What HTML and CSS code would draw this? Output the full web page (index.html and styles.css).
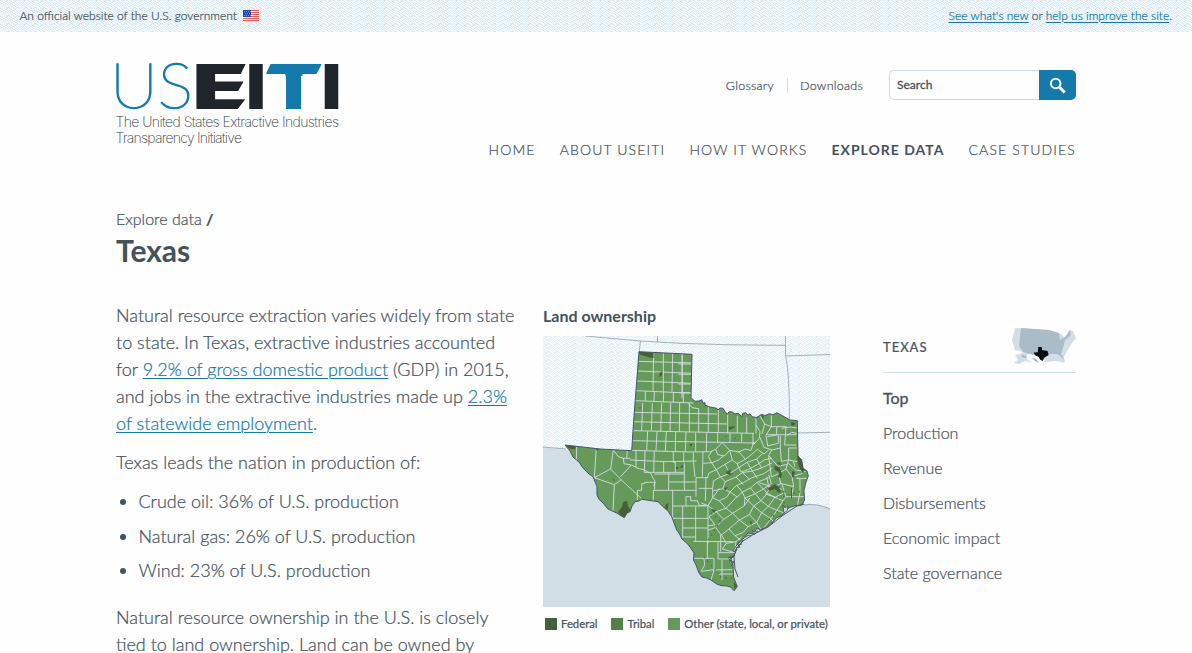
FILE: index.html
```html
<!DOCTYPE html>
<html lang="en">
<head>
<meta charset="utf-8">
<title>Texas | U.S. Extractive Industries Transparency Initiative</title>
<link rel="stylesheet" href="styles.css">
</head>
<body>
<div class="banner">
  <div class="banner-official">An official website of the U.S. government
    <svg class="flag" width="16" height="11" viewBox="0 0 16 11"><path fill="#fff0e6" d="M0 0h16v11H0z"/><path stroke="#ea5b4b" stroke-width="1" d="M0 .5h16M0 2.5h16M0 4.5h16M0 6.5h16M0 8.5h16M0 10.5h16"/><path fill="#2f43b4" d="M0 0h8v7H0z"/><path stroke="#c6cdf2" stroke-width=".7" stroke-dasharray=".8 1.2" d="M1 1.5h7M2 3.5h6M1 5.5h7"/></svg>
  </div>
  <div><a href="#">See what's new</a> or <a href="#">help us improve the site</a>.</div>
</div>
<header class="header wrap">
  <a class="logo" href="#" aria-label="USEITI">
    <svg width="226" height="90" viewBox="115 60 226 90">
      <defs>
        <clipPath id="e-cut"><path d="M190 55H250L240 75.5V80H244.5L237.5 92V97H247L237 110H190Z"/></clipPath>
        <clipPath id="t-cut"><path d="M272.5 60H324L315.5 75.7H301V112H286V75.7H265Z"/></clipPath>
      </defs>
      <text class="logo-us" x="110" y="108.300" textLength="83" lengthAdjust="spacingAndGlyphs">US</text>
      <g clip-path="url(#e-cut)"><text class="logo-bold" x="192" y="108.5" textLength="58" lengthAdjust="spacingAndGlyphs">E</text></g>
      <text class="logo-bold" x="246" y="108.5" textLength="20" lengthAdjust="spacingAndGlyphs">I</text>
      <g clip-path="url(#t-cut)"><text class="logo-bold logo-t" x="264" y="108.5" textLength="60" lengthAdjust="spacingAndGlyphs">T</text></g>
      <text class="logo-bold" x="321.5" y="108.5" textLength="20" lengthAdjust="spacingAndGlyphs">I</text>
      <text class="logo-tag" x="115.500" y="127" textLength="223.500">The United States Extractive Industries</text>
      <text class="logo-tag" x="115.500" y="143" textLength="126.500">Transparency Initiative</text>
    </svg>
  </a>
  <div class="header-right">
    <div class="tools">
      <a href="#">Glossary</a><a class="split" href="#">Downloads</a>
      <form class="search"><span class="search-field">Search</span><button class="search-button" type="button" aria-label="Search"><svg width="18" height="18" viewBox="0 0 18 18" fill="none" stroke="#fff"><circle cx="6.7" cy="6.5" r="4.8" stroke-width="2"/><path stroke-width="3" d="M10.5 10.2l5.3 5.3"/></svg></button></form>
    </div>
    <nav class="nav"><a href="#">HOME</a><a href="#">ABOUT USEITI</a><a href="#">HOW IT WORKS</a><a class="current" href="#">EXPLORE DATA</a><a href="#">CASE STUDIES</a></nav>
  </div>
</header>
<main class="wrap">
  <div class="crumb">Explore data <span>/</span></div>
  <h1>Texas</h1>
  <div class="columns">
    <section class="copy">
      <p>Natural resource extraction varies widely from state<br>to state. In Texas, extractive industries accounted<br>for <a href="#">9.2% of gross domestic product</a> (GDP) in 2015,<br>and jobs in the extractive industries made up <a href="#">2.3%</a><br><a href="#">of statewide employment</a>.</p>
      <p>Texas leads the nation in production of:</p>
      <ul><li>Crude oil: 36% of U.S. production</li><li>Natural gas: 26% of U.S. production</li><li>Wind: 23% of U.S. production</li></ul>
      <p>Natural resource ownership in the U.S. is closely<br>tied to land ownership. Land can be owned by</p>
    </section>
    <section class="ownership">
      <h2>Land ownership</h2>
      <svg class="map" width="287" height="271" viewBox="543 336 287 271">
        <defs>
          <pattern id="dots" width="9" height="8" patternUnits="userSpaceOnUse"><path fill="#f7fbfd" d="M0 0h9v8H0z"/><path fill="#e2eef5" d="M0 0h2v1H0zM4 0h1v1H4zM6 0h2v1H6zM2 1h1v1H2zM5 1h2v1H5zM0 2h1v1H0zM3 2h2v1H3zM7 2h1v1H7zM1 3h2v1H1zM5 3h1v1H5zM8 3h1v1H8zM0 4h1v1H0zM3 4h1v1H3zM6 4h2v1H6zM1 5h1v1H1zM4 5h2v1H4zM8 5h1v1H8zM2 6h2v1H2zM6 6h1v1H6zM0 7h1v1H0zM4 7h1v1H4zM7 7h2v1H7z"/></pattern>
          <path id="state" d="M639 351.7L692 354.3L691 397.7L693 399.5L695 401.3L699 401L701.7 399.8L703 403L705 402.7V405.3L710 407L716.7 408.3L718 410L720 408L723 408.3L725 411.5L727.3 414.3L729 411.8L732.3 412L735 414L738 413.2L741.7 416.5L743 413.2L745.7 412.8L748 415L750 413.7L752 416.7L756.7 417.5L761.7 414.3L765 415.5L769.3 413.7L773 414.8L776.7 412.7L782 415.5L790 420L797.3 420.7L798 456L801.7 460L803 468L807 471L808.3 476L806 482L804 490L804.5 500L802 505L796 505.5L790 507.3L786.5 510L783 505L784.5 513L781 516L776.7 517.5L772 523L766.7 527L760 530L757 528L753 534L748 533L744 538L738 543L735 548L737 549L734 555L731 559L733 565L733.5 577L737.3 586.7L734 590.7L730.5 587L726.7 586L721 585.5L716.7 584L711 580L706.7 578L702 577L699 573L696 565L693.5 560L694 553L690 547L686.7 543L682 539L679 533L676.7 530L671.7 516.7L668 511L663 506.7L658 501.7L650 500.5L641.7 499.3L639 501L635 501.7L632 506L630 511.7L627 513L624.3 517.7L620 515L616.7 513L608 509L603 503L599 499.3L597 495V486.7L593 476.7L589 474L583 468L579 462L573 457L570 451L565 445L600 449L631.7 450.7L633.7 420Z"/>
          <clipPath id="state-clip"><use href="#state"/></clipPath>
        </defs>
        <path fill="#d2dee6" d="M543 336h287v271H543z"/>
        <path fill="url(#dots)" d="M543 336H830V509Q818 503 804 504L780 490L700 470L640 455L565 450L543 447Z"/>
        <g fill="none" stroke="#8c9fad"><path stroke-width=".8" d="M543 447l23 2M585 336l55.500 5L680 343.300L730 344.800l55.500.6M640.500 341l-1.500 12M657.500 336v6M785.500 336v20q4 15 3.900 63M786 356l44-1.500M798 433l32-.7M803 505q15-2 27 4"/></g>
        <use href="#state" fill="#669a5b"/>
        <g clip-path="url(#state-clip)">
          <g fill="none" stroke="#d2dfe3" stroke-width="2.700">
            <!-- Panhandle rows -->
            <path transform="translate(540 300) scale(.333333)" d="M295 184l165 5M292 213l168 7M290 243l170 7M287 272l175 8M285 302l175 7M341 155l-2 118M370 155v120M398 155l-2 120M427 158v120M316 274v28M343 275l-1 30M371 275l-1 32M400 277v30M430 278v30"/>
            <path transform="translate(680 330) scale(.333333)" d="M6 70v135M-5 102h40M-5 133h38M-5 162h38M-5 188h39"/>
            <!-- Trans-Pecos -->
            <path transform="translate(560 430) scale(.333333)" d="M50 50l-1 48M109 53l-6 90M160 60l-8 57l-49 26l60 21l21-14l-32-33M163 164l-4 80M184 150l60 55M182 140l32-35l20 10l17 4l22 12l7 15l6 10l-5 12M160 60l15 20l15 5l2 16l22 4M187 85h24M200 84l2-22M280 180v38"/>
            <!-- North and west central -->
            <path transform="translate(630 400) scale(.333333)" d="M10 37l250 5M8 65l283 7M6 92l365 8M4 122l372 7M0 151l180 5l65-1M0 180l105 5l95-2M42 217h120M38 9l-3 83M67 9l-3 83M95 9l-3 85M122 9l-2 86M149 9l-1 86M178 9v88M176 10l10 13l20 3v72M235 20v78M265 30v68M293 38v62M322 48v50M350 52v48M378 48v52M53 93l-3 59M81 94l-3 59M109 95l-3 59M137 95l-1 60M168 96l-2 60M197 97v58M230 98l-1 56M263 98v32M300 99v28M335 99v28M369 100v34M18 152v50M45 152l-2 65M73 154l-2 64M101 185v33M130 155v32h6v31M161 157v30M190 157v27l5 47M219 155l-2 78M116 218v52M163 190v80M22 300v-29h13v-20h9v-4h30v20l-4 5M73 222h90M116 246h84M72 271h128M198 233v57M198 233h37M228 233l-2 70M206 265h42v28M182 290v12h20l5 14h24M168 318v-28h15M128 318h106M128 272v105M128 355h106M158 318v94M197 320v105M234 318v112M158 384h76M158 411h40M190 424l120 1M232 425v50M190 475h62M222 475l2 20l-10 18M252 475v35l-9 30M264 425v52h43M265 458h48M272 405v50M252 510l68-1M214 514l38-5M276 480v60M264 522h54"/>
            <!-- Central diagonal mesh -->
            <path transform="translate(630 400) scale(.333333)" d="M243 154l14-6l20-21M257 148l6 16l20 4l16-17l-22-23M299 151l28 5l18-9l18 4l8-24M245 155l-10 14l10 20l22-10l14-12M245 189l14 20l26-16l22-13l-8-29M220 190l25-2M307 180l14 11l25-13l19-15l17-15l20 14l14-12M346 178l-22-26M259 209l-22 10l-5 14M259 209l12 22l27-10l25-16l28-18l29-10l17-16M285 193l15 28M321 191l12 25l23-8l27-15l21-14l20-4M351 187l16 26M380 177l15 27M271 231l-21 12l-2 22M271 231l15 14l32-14l19-13l30-5l28-9l32-16M286 245l-8 21l-30 7M278 266l22 10l20-20l20-8l24-14l38-13l25-17M318 231l22 23M337 218l22 20M367 213l15 22M300 276l-10 16l-22 10M320 256l17 20l24-12l20-17l35-14M300 276l22 15l15-15M268 266l-20 27l20 10l20 22l32-34M361 264l15 17l24-14l24-16l-8-27M337 276l8 18l31-13M381 247l19 20M248 293l-14 24l25 18l29-10M259 335l-22 15M288 325l20 15l35-23l2-23M343 317l17-24M259 335l22 23l27-18M345 294l26 24l22-16l-17-21M393 302l19-22l-12-13M308 340l20 20l30-16l13-26M281 358l-24 25l17 22l23-18l31-27M371 318l24 20l20-19l-22-17M358 344l22 23l15-29M297 387l18 20l25-10l14-17l26-13M328 360l26 20M395 338l28 18l18-25l-26-12M415 319l20-27l24 10l-18 29M274 405l15 25l29-5l17-15M289 430l-12 17l41 12M318 425l-3 24M380 367l15 25l28-36M423 356l15 18M441 331l22 8M412 280l23 12M234 317l-20-8M237 350l18 25l-20 2M255 383l-22 8M315 407l25 20"/>
            <!-- East -->
            <path transform="translate(630 400) scale(.333333)" d="M378 75l12 20l-2 20l-19 20M390 48l14 24l-8 30M404 72l20 8h45M424 46v34l-16 26l5 32M440 80v25l-28 5M412 104h87M445 105v25l-33 8M468 80l-4 55h35M455 85l25-4l21 3M470 107l15-10l16 3M390 112l12 30l24 8l25-6v-36M451 144l3 40l22-4v-36M425 150l-9 17l28 32l28-6l4-13M475 144h25M476 180l25 5M416 167l8 64l22-10l22-14l4-15M446 221l6 30l-25 12M468 207l18 23l5 30l-39-10M486 230l32-10M495 200l-5-16M490 230l20 7v42M500 235h30M455 250l13 40h60M425 260l-18 22l28 10l24-12M434 263l22 5M459 302l9-13M490 262l-6 30M510 278l-8 40M475 190l22 20l30 5M388 248l35 12M410 230l7 35"/>
          </g>
          <g fill="#466039">
            <path d="M639 351.800l14.500.7v5.500l-4-.5-10-3zM657 378l2.500-2v-3l3-2-1 5-3 1zM565 445l11 1.500-1 3-6-1zM595 448h5l-3 3zM623 502l4-1 1 5 3 5-4 6h-5l-4-5 4-5zM666 504l2.500-1-1 7-3-1zM728.500 427l7-1-2 2-4 2zM755 416h4l-2 3zM761 415l3 1-1 3zM791 422l4.500 1-1 2-3 1zM726 472l5-3-1 4 3 1-3 1-3-1zM774 466l5 1 3 7-1 4-3-1 1-5-4-2zM768 488l7-4 4 3 2 5-2 1-4-4-6 2zM792 471l3 1-1 4 3 2-5-1zM797 456h5l3 13-2 4-3-4-2-5zM681 466l2-1v2l-3 1zM724 488l4-1-3 4zM711 509l5 1-2 3zM750 521l2 1-1 4zM734 582l3 4-3 3zM791 488h1v10h-1zM777 463l3-1 1 4zM676 467h2v2h-2zM690 444h2v2h-2zM735 438h1v1h-1zM725 436h1v1h-1z"/>
          </g>
          <g fill="none" stroke="#49713f" stroke-width="1.300" stroke-dasharray="1.400 4"><path d="M708 540l15-22M704 557l15 17M720 577l14 2M769 520l9-9M778 498l24-7M784 491v15M711 513l9 8M640 407v4M613 480h2"/></g>
        </g>
        <use href="#state" fill="none" stroke="#465564" stroke-width="1"/>
        <path fill="#d2dee6" stroke="#465564" stroke-width=".8" d="M783 505l2 3 3-2-1 5-3 2zM752 530l2 2 4-1-4 4zM733 551l3-5 4-4 3-2-3 4-6 8z"/>
        <path fill="none" stroke="#465564" stroke-width="1" d="M804 504l-7 2-15 10-14 11-14 7-11 7-7 8-2 8 1 12 3 8M728 558l6-2-5 4 5 2-3 4M736 548l4-1-2-2 4-1M745 537l4-2 2 1"/>
      </svg>
      <div class="legend"><span><i class="federal"></i>Federal</span><span><i class="tribal"></i>Tribal</span><span><i class="other"></i>Other (state, local, or private)</span></div>
    </section>
    <aside class="side">
      <div class="side-head"><span>TEXAS</span>
        <svg width="65" height="38" viewBox="1011 327 65 38"><path fill="#d1dee6" d="M1015 328l34 2 12 4 4 4 5-8 3 1 3 7-4 5-5 8-3 6 1 5-3 1-4-6-10 1-9-2-24-6-3-10z"/><path fill="#a9bcc8" d="M1021 328l28 2 10 3 1 7 5-3 5-7 1 5-6 5-2 8-3 8-16 1-20-4-5-7z"/><path fill="#d1dee6" d="M1043 354l15 0 5 8-9-1-9 1zM1015 355l5-1 3-2 4 1v6l5 4-7-2-6 3-5-1 4-3z"/><path fill="#9eb4c1" d="M1022 355l4 1v2l-4-1zM1032 358l4 1 3 4-4-2zM1059 354l3 1 2 5z"/><path fill="#080b0e" d="M1038.300 346.700L1042 347.200V350L1047.500 351L1048.700 355L1044.500 357.500L1042.500 361L1040 359.500L1038.500 356.700L1035.500 355.500L1033.600 352.600L1037.800 352.200Z"/></svg>
      </div>
      <ul><li class="active">Top</li><li>Production</li><li>Revenue</li><li>Disbursements</li><li>Economic impact</li><li>State governance</li></ul>
    </aside>
  </div>
</main>
</body>
</html>
```
FILE: styles.css
```css
* { box-sizing: border-box; }
body { margin: 0; height: 653px; overflow: hidden; background: #fefefe; color: #44525c; font-family: Lato, sans-serif; font-weight: 300; -webkit-text-stroke: .22px; }
a { color: inherit; text-decoration: none; }
svg text { -webkit-text-stroke: 0; }
.wrap { width: 960px; margin: 0 auto; }
.banner { height: 32px; padding: 0 20px 2px 19.500px; display: flex; justify-content: space-between; align-items: center; font-size: 12px; background: #f4f9fb url("data:image/svg+xml,%3Csvg xmlns='http://www.w3.org/2000/svg' width='9' height='8'%3E%3Cpath fill='%23dbeaf2' d='M0 0h2v1H0zM4 0h1v1H4zM6 0h2v1H6zM2 1h1v1H2zM5 1h2v1H5zM0 2h1v1H0zM3 2h2v1H3zM7 2h1v1H7zM1 3h2v1H1zM5 3h1v1H5zM8 3h1v1H8zM0 4h1v1H0zM3 4h1v1H3zM6 4h2v1H6zM1 5h1v1H1zM4 5h2v1H4zM8 5h1v1H8zM2 6h2v1H2zM6 6h1v1H6zM0 7h1v1H0zM4 7h1v1H4zM7 7h2v1H7z'/%3E%3C/svg%3E"); }
.banner a, .copy a { color: #147aac; text-decoration: underline; text-decoration-thickness: 1px; text-underline-offset: 2px; }
.flag { margin-left: 3px; vertical-align: -1px; }
.header { height: 177px; display: flex; justify-content: space-between; padding-top: 28px; }
.logo { margin-left: -1px; }
.logo svg { display: block; overflow: visible; }
.logo-us { font: 100 62px Lato, sans-serif; fill: #147aac; stroke: #147aac; stroke-width: 1.500px; }
.logo-bold { font: 900 62px Inter, sans-serif; fill: #1f252a; }
.logo-t { fill: #147aac; }
.logo-tag { font: 200 14px Inter, sans-serif; fill: #333b41; }
.header-right { display: flex; flex-direction: column; align-items: flex-end; padding-top: 10px; }
.tools { display: flex; align-items: center; height: 30px; font-size: 12.500px; letter-spacing: .25px; }
.split { margin-left: 13px; padding-left: 12px; border-left: 1px solid #d2dee6; }
.search { width: 187px; height: 30px; margin-left: 26px; display: flex; }
.search-field { flex: 1; border: 1px solid #cddce4; border-right: 0; border-radius: 5px 0 0 5px; padding: 6px 7px; font-size: 12px; line-height: 16px; font-weight: 400; -webkit-text-stroke: .3px; letter-spacing: 0; }
.search-button { width: 37px; border: 0; border-radius: 0 5px 5px 0; background: #147aac; padding: 1px 0 0; display: grid; place-items: center; }
.nav { display: flex; gap: 24px; margin-top: 41px; font-size: 14px; line-height: 18px; letter-spacing: 1.150px; }
.nav .current { font-weight: 700; -webkit-text-stroke: 0; letter-spacing: 1px; }
.crumb { font-size: 16px; line-height: 20px; }
.crumb span { font-weight: 700; }
h1 { margin: 3px 0 0; font-size: 30px; line-height: 36px; font-weight: 700; -webkit-text-stroke: 0; }
.columns { display: flex; margin-top: 34px; }
.copy { width: 427px; flex: none; font-size: 18px; line-height: 27px; white-space: nowrap; }
.copy p { margin: 0 0 12px; }
.copy ul { margin: 0 0 20px; padding-left: 22.500px; }
.copy li { margin-bottom: 7.700px; }
.ownership { width: 287px; flex: none; }
h2 { margin: 3px 0 9px; font-size: 16px; line-height: 22px; font-weight: 700; -webkit-text-stroke: 0; }
.map { display: block; }
.legend { display: flex; gap: 14px; padding: 9px 0 0 2px; font-size: 11.300px; line-height: 16px; font-weight: 400; white-space: nowrap; }
.legend span { display: flex; align-items: center; gap: 4px; }
.legend i { width: 12px; height: 12px; }
.federal { background: #426238; }
.tribal { background: #54804a; }
.other { background: #669a5b; }
.side { width: 193px; margin-left: 53px; padding-top: 22px; }
.side-head { height: 49px; border-bottom: 1px solid #cee0e7; display: flex; justify-content: space-between; font-size: 13px; font-weight: 400; letter-spacing: 1px; }
.side-head span { padding-top: 15px; }
.side-head svg { margin-top: 3px; }
.side ul { list-style: none; margin: 7px 0 0; padding: 0; font-size: 16px; line-height: 35px; }
.active { font-weight: 400; -webkit-text-stroke: .3px; }
```
